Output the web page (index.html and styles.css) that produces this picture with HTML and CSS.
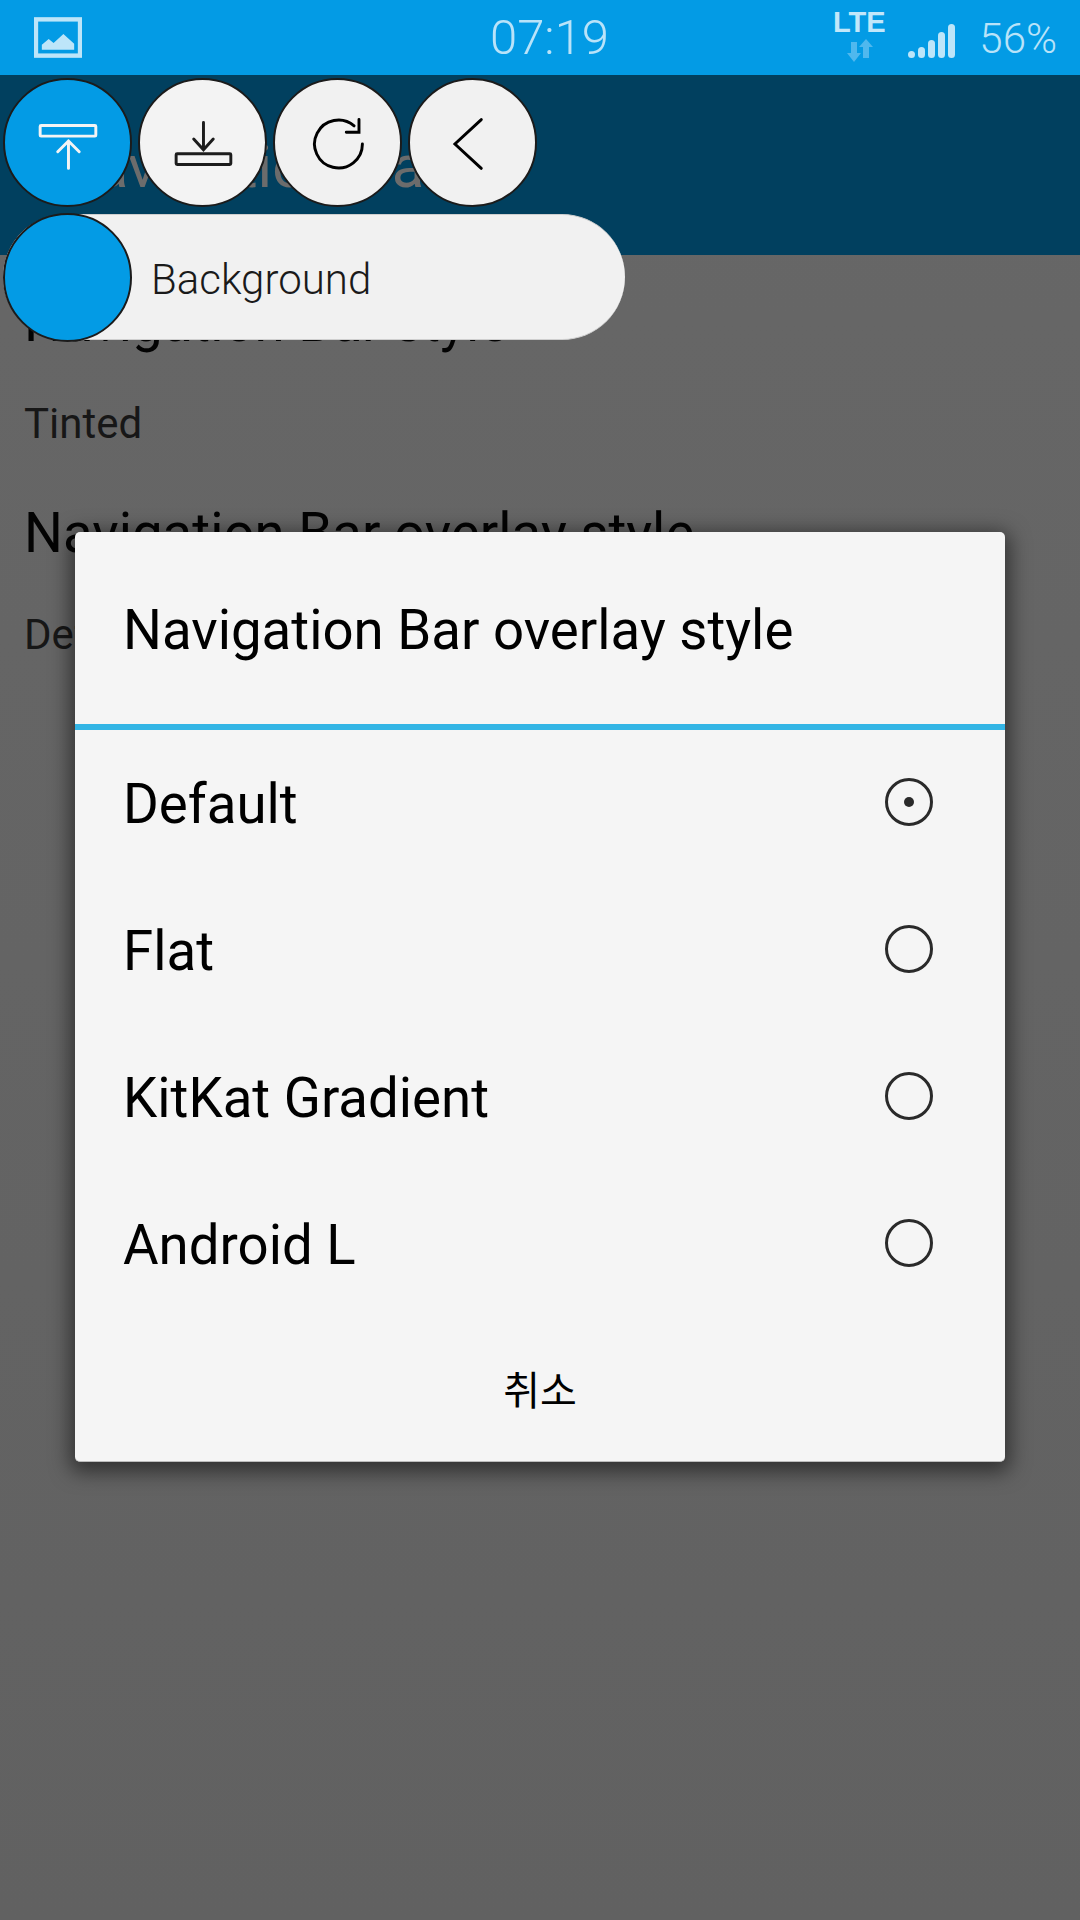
FILE: index.html
```html
<!DOCTYPE html>
<html lang="en">
<head>
<meta charset="utf-8">
<title>Navigation Bar</title>
<link rel="stylesheet" href="styles.css">
</head>
<body>
<div class="screen">
  <header class="status">
    <svg class="st-image" viewBox="0 0 49 41"><rect x="2" y="2" width="45" height="37" class="st-frame"/><path d="M8 33V28L15 22L20 26L30 17L41 27V33Z" class="st-fill"/></svg>
    <span class="st-time">07:19</span>
    <div class="st-right">
      <div class="st-lte">
        <span class="lte-text">LTE</span>
        <svg class="lte-arrows" viewBox="0 0 28 23"><path d="M5 3H11V14H15L8 23L1 14H5Z M17 19V8H13L20 0L27 8H23V19Z" class="arrows-fill"/></svg>
      </div>
      <div class="signal">
        <i class="bar b1"></i><i class="bar b2"></i><i class="bar b3"></i><i class="bar b4"></i><i class="bar b5"></i>
      </div>
      <span class="st-battery">56%</span>
    </div>
  </header>

  <div class="appbar"><span class="appbar-title">Navigation Bar</span></div>

  <main class="list">
    <section class="item">
      <h2 class="item-title">Navigation Bar style</h2>
      <p class="item-sub">Tinted</p>
    </section>
    <section class="item">
      <h2 class="item-title">Navigation Bar overlay style</h2>
      <p class="item-sub">Default</p>
    </section>
  </main>

  <div class="float-panel">
    <div class="fab-row">
      <button class="fab fab-blue">
        <svg class="fab-icon light" viewBox="-1 -0.500 128 128"><rect x="35" y="46" width="57" height="11" rx="1"/><path d="M64 90V62M53 73L64 62L75 73"/></svg>
      </button>
      <button class="fab">
        <svg class="fab-icon dark" viewBox="-1 -0.500 128 128"><path d="M64 43V71M54 60L64 71L74 60"/><rect x="36" y="75" width="56" height="11" rx="1"/></svg>
      </button>
      <button class="fab fab-alt">
        <svg class="fab-icon black" viewBox="-1 -0.500 128 128"><path d="M88.500 65A24.500 24.500 0 1 1 80 46.500M85 40V53H72"/></svg>
      </button>
      <button class="fab fab-alt">
        <svg class="fab-icon black" viewBox="-1 -0.500 128 128"><path d="M72 40L45 65L72 90"/></svg>
      </button>
    </div>
    <div class="pill">
      <span class="fab fab-blue pill-dot"></span>
      <span class="pill-label">Background</span>
    </div>
  </div>

  <div class="dialog">
    <div class="dlg-title"><span class="dlg-title-text">Navigation Bar overlay style</span></div>
    <div class="dlg-rows">
      <div class="dlg-row"><span class="dlg-label">Default</span><span class="radio on"></span></div>
      <div class="dlg-row"><span class="dlg-label">Flat</span><span class="radio"></span></div>
      <div class="dlg-row"><span class="dlg-label">KitKat Gradient</span><span class="radio"></span></div>
      <div class="dlg-row"><span class="dlg-label">Android L</span><span class="radio"></span></div>
    </div>
    <div class="dlg-cancel">취소</div>
  </div>
</div>
</body>
</html>
```

FILE: styles.css
```css
* { box-sizing: border-box; }
html, body { margin: 0; padding: 0; }
body { width: 1080px; height: 1920px; overflow: hidden; font-family: Roboto, "Noto Sans CJK KR", sans-serif; }

.screen {
  position: relative;
  width: 1080px;
  height: 1920px;
  overflow: hidden;
  display: flex;
  flex-direction: column;
  background: linear-gradient(#676767, #616161);
}

/* status bar */
.status {
  height: 75px;
  flex: none;
  background: #039be5;
  display: flex;
  align-items: center;
  padding: 0 23px 0 34px;
  color: #b9e3f9;
}
.st-image { width: 48px; height: 41px; margin-top: -1px; }
.st-frame { fill: none; stroke: #bde5f9; stroke-width: 4.500; }
.st-fill { fill: #bde5f9; }
.st-time { margin-left: 408px; font-size: 49px; font-weight: 300; line-height: 75px; }
.st-right { margin-left: auto; display: flex; align-items: center; }
.st-lte { width: 50px; height: 62px; display: flex; flex-direction: column; align-items: center; margin-top: 0; }
.lte-text { font-family: "Liberation Sans", sans-serif; font-weight: 700; font-size: 29px; line-height: 30px; color: #c2e7fa; }
.lte-arrows { width: 28px; height: 23px; margin-top: 2px; margin-left: 2px; }
.arrows-fill { fill: #4fb8ee; }
.signal { display: flex; align-items: flex-end; gap: 3px; height: 34px; margin-left: 24px; margin-top: 6px; }
.bar { display: block; width: 7px; background: #bde5f9; border-radius: 4px; }
.b1 { height: 7px; }
.b2 { height: 11px; }
.b3 { height: 18px; }
.b4 { height: 26px; }
.b5 { height: 34px; }
.st-battery { margin-left: 24px; font-size: 42px; font-weight: 300; line-height: 75px; padding-top: 2px; }

/* app bar under the floating panel */
.appbar {
  height: 180px;
  flex: none;
  background: #01405f;
  padding: 0 0 0 53px;
  display: flex;
  align-items: flex-end;
}
.appbar-title { font-size: 60px; line-height: 70px; margin-bottom: 53px; color: #6c6c6c; }

/* settings list */
.list { flex: 1; }
.item { padding: 36px 24px 19px; height: 211px; }
.item-title { margin: 0; font-size: 54.6px; font-weight: 400; line-height: 63px; color: #030303; }
.item-sub { margin: 46px 0 0; font-size: 42px; line-height: 47px; color: #171717; }

/* floating widgets */
.float-panel { position: absolute; left: 3px; top: 78px; }
.fab-row { display: flex; gap: 6px; }
.fab {
  display: block;
  width: 129px;
  height: 129px;
  padding: 0;
  border: 2px solid #1b1b1b;
  border-radius: 50%;
  background: #f3f3f3;
  flex: none;
}
.fab-alt { background: #f1f1f1; }
.fab-blue { background: #039be5; }
.fab-icon { display: block; width: 125px; height: 125px; fill: none; stroke-width: 3; stroke-linecap: round; overflow: visible; }
.light { stroke: #f4f4f4; }
.dark { stroke: #1c1c1c; }
.black { stroke: #000; }
.pill {
  margin-top: 7px;
  width: 622px;
  height: 126px;
  display: flex;
  align-items: center;
  background: #f1f1f1;
  border-top: 1px solid #cfcfcf;
  border-bottom: 1px solid #cfcfcf;
  border-radius: 63px;
}
.pill-label { margin-left: 19px; padding-top: 5px; font-size: 42px; font-weight: 300; color: #1a1a1a; }

/* dialog */
.dialog {
  position: absolute;
  left: 75px;
  top: 532px;
  width: 930px;
  height: 930px;
  background: #f5f5f5;
  border-radius: 5px;
  border-bottom: 1px solid #bcbcbc;
  box-shadow: 0 5px 20px 5px rgba(0, 0, 0, .5);
  display: flex;
  flex-direction: column;
}
.dlg-title {
  height: 198px;
  flex: none;
  border-bottom: 6px solid #33b5e5;
  padding: 4px 48px 0;
  display: flex;
  align-items: center;
  font-size: 54.6px;
  color: #000;
}
.dlg-rows { flex: none; }
.dlg-row {
  height: 147px;
  display: flex;
  align-items: center;
  justify-content: space-between;
  padding: 0 72px 3px 48px;
  font-size: 54.6px;
  color: #000;
}
.dlg-label { padding-top: 3px; }
.radio {
  width: 48px;
  height: 48px;
  border: 3px solid #2a2a2a;
  border-radius: 50%;
  display: flex;
  align-items: center;
  justify-content: center;
}
.radio.on::after {
  content: "";
  width: 10px;
  height: 10px;
  border-radius: 50%;
  background: #2a2a2a;
}
.dlg-cancel {
  flex: 1;
  display: flex;
  align-items: center;
  justify-content: center;
  font-family: "Noto Sans CJK KR", sans-serif;
  font-size: 40px;
  color: #000;
  padding-bottom: 3px;
}
```
